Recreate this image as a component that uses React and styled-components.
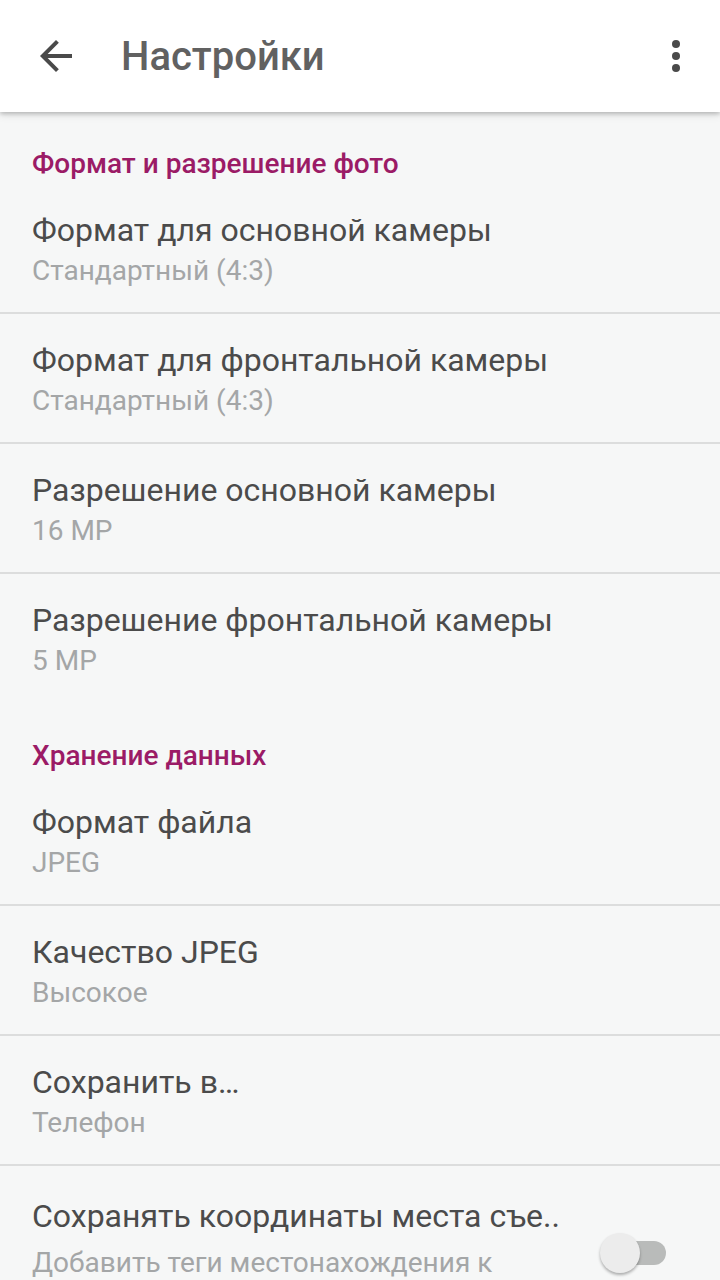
import React from "react";
import styled, { createGlobalStyle } from "styled-components";

const GlobalStyle = createGlobalStyle`
  html, body {
    margin: 0;
    padding: 0;
    background: #f6f7f7;
    font-family: Roboto, "Noto Sans", sans-serif;
  }
`;

const Screen = styled.div`
  width: 720px;
  height: 1280px;
  overflow: hidden;
  background: #f6f7f7;
  display: flex;
  flex-direction: column;
`;

const AppBar = styled.header`
  height: 112px;
  flex-shrink: 0;
  background: #ffffff;
  display: flex;
  align-items: center;
  padding: 0 20px 0 32px;
  box-shadow: 0 2px 4px rgba(0, 0, 0, 0.2), 0 4px 8px rgba(0, 0, 0, 0.08);
  position: relative;
  z-index: 1;
`;

const IconButton = styled.div`
  width: 48px;
  height: 48px;
  display: flex;
  align-items: center;
  justify-content: center;
  color: #4a4a4a;
`;

const BarTitle = styled.h1`
  flex: 1;
  margin: 0 0 0 41px;
  font-size: 40px;
  font-weight: 500;
  color: #616161;
`;

const List = styled.main`
  display: flex;
  flex-direction: column;
`;

const SectionHeader = styled.div`
  height: 72px;
  box-sizing: border-box;
  padding: 35px 32px 0;
  font-size: 28px;
  font-weight: 500;
  color: #9b1b66;
  line-height: 34px;
`;

const Row = styled.div`
  height: 130px;
  box-sizing: border-box;
  padding: ${(p) => (p.$tall ? "30px" : "26px")} 32px 0;
  display: flex;
  align-items: flex-start;
  border-bottom: ${(p) => (p.$last ? "none" : "2px solid #dcdddd")};
`;

const RowText = styled.div`
  flex: 1;
  min-width: 0;
`;

const RowTitle = styled.div`
  font-size: 32px;
  line-height: 40px;
  color: #4b4b4b;
  white-space: nowrap;
`;

const RowSub = styled.div`
  margin-top: ${(p) => (p.$spaced ? "6px" : "0")};
  font-size: 28px;
  line-height: 42px;
  color: #a4a6a7;
  white-space: nowrap;
`;

const Switch = styled.div`
  position: relative;
  width: 66px;
  height: 40px;
  margin: 37px 22px 0 0;
  flex-shrink: 0;
`;

const Track = styled.div`
  position: absolute;
  left: 18px;
  top: 8px;
  width: 48px;
  height: 24px;
  border-radius: 12px;
  background: #b9bbba;
`;

const Thumb = styled.div`
  position: absolute;
  left: 0;
  top: 0;
  width: 40px;
  height: 40px;
  border-radius: 50%;
  background: #ececec;
  box-shadow: 0 2px 3px rgba(0, 0, 0, 0.3);
`;

const sections = [
  {
    title: "Формат и разрешение фото",
    items: [
      ["Формат для основной камеры", "Стандартный (4:3)"],
      ["Формат для фронтальной камеры", "Стандартный (4:3)"],
      ["Разрешение основной камеры", "16 MP"],
      ["Разрешение фронтальной камеры", "5 MP"],
    ],
    lastDivider: false,
  },
  {
    title: "Хранение данных",
    items: [
      ["Формат файла", "JPEG"],
      ["Качество JPEG", "Высокое"],
      ["Сохранить в…", "Телефон"],
    ],
    lastDivider: true,
  },
];

export default function App() {
  return (
    <Screen>
      <GlobalStyle />
      <AppBar>
        <IconButton>
          <svg width="48" height="48" viewBox="0 0 24 24">
            <path
              fill="currentColor"
              d="M20 11H7.83l5.59-5.59L12 4l-8 8 8 8 1.41-1.41L7.83 13H20v-2z"
            />
          </svg>
        </IconButton>
        <BarTitle>Настройки</BarTitle>
        <IconButton>
          <svg width="48" height="48" viewBox="0 0 24 24">
            <circle cx="12" cy="6" r="2" fill="currentColor" />
            <circle cx="12" cy="12" r="2" fill="currentColor" />
            <circle cx="12" cy="18" r="2" fill="currentColor" />
          </svg>
        </IconButton>
      </AppBar>
      <List>
        {sections.map((s) => (
          <React.Fragment key={s.title}>
            <SectionHeader>{s.title}</SectionHeader>
            {s.items.map(([t, sub], i) => (
              <Row key={t} $last={i === s.items.length - 1 && !s.lastDivider}>
                <RowText>
                  <RowTitle>{t}</RowTitle>
                  <RowSub>{sub}</RowSub>
                </RowText>
              </Row>
            ))}
          </React.Fragment>
        ))}
        <Row $last $tall>
          <RowText>
            <RowTitle>Сохранять координаты места съе..</RowTitle>
            <RowSub $spaced>Добавить теги местонахождения к</RowSub>
          </RowText>
          <Switch>
            <Track />
            <Thumb />
          </Switch>
        </Row>
      </List>
    </Screen>
  );
}
